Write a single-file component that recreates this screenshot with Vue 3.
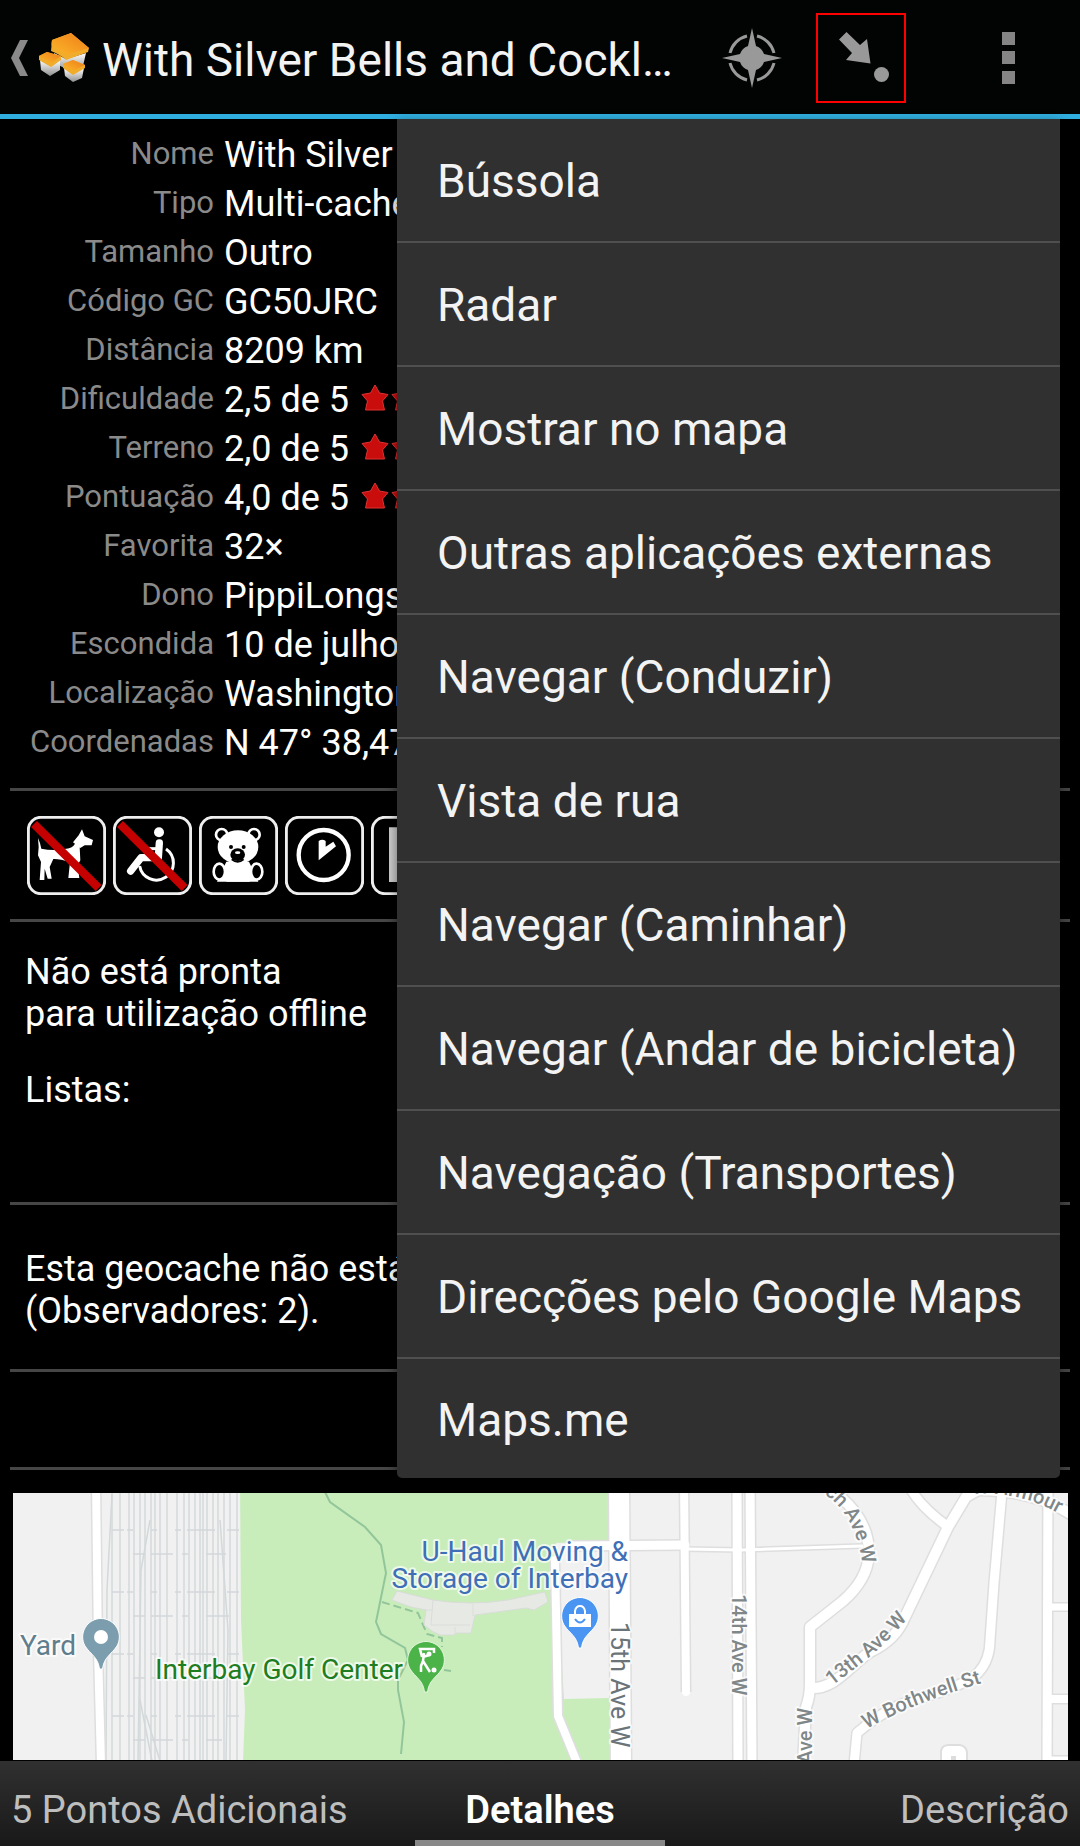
<script setup>
const details = [
  { label: 'Nome', value: 'With Silver Bells and Cockle Shells' },
  { label: 'Tipo', value: 'Multi-cache' },
  { label: 'Tamanho', value: 'Outro' },
  { label: 'Código GC', value: 'GC50JRC' },
  { label: 'Distância', value: '8209 km' },
  { label: 'Dificuldade', value: '2,5 de 5', stars: 3 },
  { label: 'Terreno', value: '2,0 de 5', stars: 2 },
  { label: 'Pontuação', value: '4,0 de 5', stars: 4 },
  { label: 'Favorita', value: '32×' },
  { label: 'Dono', value: 'PippiLongstocking' },
  { label: 'Escondida', value: '10 de julho' },
  { label: 'Localização', value: 'Washington' },
  { label: 'Coordenadas', value: 'N 47° 38,47' },
]

const menu = [
  'Bússola',
  'Radar',
  'Mostrar no mapa',
  'Outras aplicações externas',
  'Navegar (Conduzir)',
  'Vista de rua',
  'Navegar (Caminhar)',
  'Navegar (Andar de bicicleta)',
  'Navegação (Transportes)',
  'Direcções pelo Google Maps',
  'Maps.me',
]

const rails = [112, 120, 129, 134, 140, 145, 151, 155, 160, 167, 177, 184, 189, 195, 200, 203, 207, 213, 218, 224, 230, 237]
const sleepers = [
  { y: 1530, d: 'M112 0h12m3 0h6m18 0h6m18 0h6m6 0h28m12 0h12' },
  { y: 1554, d: 'M133 0h12m6 0h22m9 0h6m18 0h20' },
  { y: 1592, d: 'M112 0h12m3 0h6m18 0h6m18 0h6m6 0h28m12 0h12' },
  { y: 1616, d: 'M133 0h12m6 0h22m9 0h6m18 0h23' },
  { y: 1654, d: 'M112 0h12m3 0h6m18 0h6m18 0h6m6 0h28m12 0h12' },
  { y: 1678, d: 'M133 0h12m6 0h22m9 0h6m18 0h20' },
  { y: 1716, d: 'M112 0h12m3 0h6m18 0h6m18 0h6m6 0h28m12 0h12' },
  { y: 1740, d: 'M133 0h12m6 0h22m9 0h6m18 0h16' },
]

const roads = [
  { d: 'M570 1546 L685 1545', w: 9 },
  { d: 'M685 1549 L740 1550 L862 1546', w: 3 },
  { d: 'M96 1480 L98 1650 L101 1765', w: 8 },
  { d: 'M555 1560 L558 1716 L578 1765', w: 8 },
  { d: 'M684 1480 L686 1692', w: 8 },
  { d: 'M737 1480 L738 1765', w: 9 },
  { d: 'M750 1480 L752 1765', w: 9 },
  { d: 'M826 1486 Q870 1515 869 1555 Q867 1580 843 1601 L810 1627 L810 1683 Q810 1697 806 1707 L803 1765', w: 10 },
  { d: 'M810 1688 C835 1690 850 1665 870 1652 Q896 1640 905 1617 L948 1527 L966 1497 L985 1486', w: 10 },
  { d: 'M908 1484 Q918 1505 947 1526', w: 9 },
  { d: 'M854 1765 L857 1733 Q890 1704 925 1697 Q965 1685 978 1673 Q990 1660 990 1640 L994 1583 L1003 1480', w: 9 },
  { d: 'M975 1490 Q1035 1490 1072 1515', w: 10 },
  { d: 'M1048 1480 L1047 1765', w: 9 },
  { d: 'M1048 1607 H1072', w: 7 },
  { d: 'M1048 1699 H1072', w: 8 },
  { d: 'M1050 1759 H1072', w: 5 },
  { d: 'M619 1480 L621 1770', w: 20 },
]

const pinPath = 'M0 -18.5 A18.5 18.5 0 0 1 16 9 C10 18 3 20 1.500 32 H-1.500 C-3 20 -10 18 -16 9 A18.5 18.5 0 0 1 0 -18.5Z'
</script>

<template>
  <div class="screen">
    <header class="bar">
      <button class="up" type="button" aria-label="Voltar">
        <svg class="chevron" viewBox="0 0 17 36"><path d="M9 0H17L8 18L17 36H9L0 18Z" fill="#8a8a8a" /></svg>
        <svg class="logo" viewBox="36 32 54 54">
          <defs>
            <linearGradient id="lid" x1="0" y1="1" x2="1" y2="0">
              <stop offset="0" stop-color="#fbb829" /><stop offset="1" stop-color="#ef7c1a" />
            </linearGradient>
            <linearGradient id="box" x1="0" y1="0" x2="0" y2="1">
              <stop offset="0" stop-color="#fff" /><stop offset="1" stop-color="#8f8f8f" />
            </linearGradient>
          </defs>
          <path d="M53 54L65 60L85 54L82 67L70 72L57 66Z" fill="url(#box)" />
          <path d="M70 34L51 41L50 52Q60 56 65 61L87 53L88 49Z" fill="#f0ac2a" />
          <path d="M70 34L51 41Q50 46 51 47L65 56L88 49Z" fill="url(#lid)" />
          <path d="M39 61L50 67L59 61V71L49 77L40 71Z" fill="url(#box)" />
          <path d="M46 53L38 57V61L50 68L60 61V57Z" fill="#f0ac2a" />
          <path d="M46 53L38 57L50 64L60 57Z" fill="url(#lid)" />
          <path d="M63 69L72 74L83 69L81 79L72 83L64 77Z" fill="url(#box)" />
          <path d="M72 61L62 65V69L72 76L84 69V66Z" fill="#f0ac2a" />
          <path d="M72 61L62 65L72 72L84 66Z" fill="url(#lid)" />
        </svg>
      </button>
      <h1 class="title">With Silver Bells and Cockle Shells</h1>
      <button class="action" type="button" aria-label="Bússola">
        <svg viewBox="-30 -30 60 60" width="60" height="60">
          <g fill="none" stroke="#999" stroke-width="3">
            <path d="M-22 -5A23 23 0 0 1 -5 -22M5 -22A23 23 0 0 1 22 -5M22 5A23 23 0 0 1 5 22M-5 22A23 23 0 0 1 -22 5" />
          </g>
          <path d="M0 -30L4 -12A13 13 0 0 1 12 -4L30 0L12 4A13 13 0 0 1 4 12L0 30L-4 12A13 13 0 0 1 -12 4L-30 0L-12 -4A13 13 0 0 1 -4 -12Z" fill="#999" />
        </svg>
      </button>
      <button class="action marked" type="button" aria-label="Navegar" aria-expanded="true">
        <svg viewBox="2 2 86 86" width="86" height="86" fill="#999">
          <path d="M30.500 19L23 26.500L36 40L30 47L54.500 50.500L51 26L44 32Z" /><circle cx="65.500" cy="61.500" r="7.500" />
        </svg>
      </button>
      <button class="action more" type="button" aria-label="Mais opções">
        <svg viewBox="0 0 13 52" width="13" height="52" fill="#858585"><path d="M0 0H13V13H0ZM0 19H13V32H0ZM0 39H13V52H0Z" /></svg>
      </button>
    </header>

    <main class="body">
      <dl class="details">
        <div v-for="row in details" :key="row.label" class="row">
          <dt>{{ row.label }}</dt>
          <dd>
            {{ row.value }}
            <span v-if="row.stars" class="stars">
              <svg v-for="n in row.stars" :key="n" viewBox="0 0 28 27">
                <path d="M14 1L18.500 9L27 10.500L21.500 17L23.500 26H4.500L6.500 17L1 10.500L9.500 9Z" fill="#c90d0d" stroke="#d33" stroke-linejoin="round" />
              </svg>
            </span>
          </dd>
        </div>
      </dl>

      <section class="block attributes">
        <svg viewBox="83 107 237 237">
          <rect x="87" y="111" width="229" height="229" rx="38" fill="#000" stroke="#eee" stroke-width="9" />
          <path d="M116 173Q124 190 126 205Q160 212 195 206Q220 204 227 190L241 200L243 240L235 255L240 293H207L212 245Q180 235 162 236L151 260L157 295H145L136 265L135 299H121L125 245L116 225L118 200ZM221 186L238 165L248 147L256 168L281 179L277 195L256 195L243 203Z" fill="#fff" />
          <path d="M104 131L298 323" stroke="#c40000" stroke-width="25" />
        </svg>
        <svg viewBox="341 107 237 237">
          <rect x="345" y="111" width="229" height="229" rx="38" fill="#000" stroke="#eee" stroke-width="9" />
          <circle cx="479" cy="156" r="15" fill="#fff" />
          <path d="M480 188L477 232H425L394 272" fill="none" stroke="#fff" stroke-width="22" stroke-linecap="round" stroke-linejoin="round" />
          <path d="M440 205H478" stroke="#fff" stroke-width="9" />
          <path d="M500 206A51 51 0 1 1 421 257" fill="none" stroke="#fff" stroke-width="9" />
          <path d="M362 131L556 323" stroke="#c40000" stroke-width="25" />
        </svg>
        <svg viewBox="598 107 237 237">
          <rect x="602" y="111" width="229" height="229" rx="38" fill="#000" stroke="#eee" stroke-width="9" />
          <g fill="#000" stroke="#fff" stroke-width="8"><circle cx="666" cy="163" r="17" /><circle cx="763" cy="163" r="17" /></g>
          <ellipse cx="715" cy="200" rx="61" ry="50" fill="#fff" />
          <path d="M680 244H748L776 304H652Z" fill="#fff" />
          <g fill="#000" stroke="#fff" stroke-width="8"><ellipse cx="659" cy="274" rx="17" ry="24" /><ellipse cx="771" cy="274" rx="17" ry="24" /></g>
          <path d="M674 262L680 304H750L757 262Z" fill="#fff" />
          <circle cx="694" cy="200" r="6" /><circle cx="732" cy="200" r="6" />
          <ellipse cx="714" cy="223" rx="22" ry="19" /><ellipse cx="714" cy="217" rx="8" ry="4" fill="#fff" />
          <path d="M696 237Q714 252 732 237" fill="none" stroke="#000" stroke-width="5" />
        </svg>
        <svg viewBox="856 107 237 237">
          <rect x="860" y="111" width="229" height="229" rx="38" fill="#000" stroke="#eee" stroke-width="9" />
          <circle cx="972" cy="224" r="75" fill="none" stroke="#fff" stroke-width="13" />
          <path d="M957 182Q968 174 978 182V199L1001 184L1009 198L957 240Z" fill="#fff" />
        </svg>
        <svg viewBox="1114 107 237 237">
          <rect x="1118" y="111" width="229" height="229" rx="38" fill="#000" stroke="#eee" stroke-width="9" />
          <path d="M1168 141H1296V305H1168Z" fill="#ccc" />
        </svg>
      </section>

      <section class="block offline">
        <p>Não está pronta<br />para utilização offline</p>
        <p>Listas:</p>
      </section>

      <section class="block watch">
        <p>Esta geocache não está na sua lista<br />(Observadores: 2).</p>
      </section>

      <section class="block spacer"></section>

      <section class="block map">
        <svg viewBox="13 1493 1055 267" role="img" aria-label="Mapa">
          <defs>
            <path id="along12" d="M824 1494Q860 1517 864 1580" />
            <path id="along13" d="M832 1686C853 1669 876 1656 908 1618" />
            <path id="bothwell" d="M867 1729Q910 1704 985 1682" />
            <path id="armour" d="M972 1494Q1030 1490 1078 1526" />
          </defs>
          <rect x="13" y="1480" width="1055" height="290" fill="#f1f1f1" />
          <g fill="none" stroke="#d3d8da" stroke-width="1.500">
            <path v-for="x in rails" :key="x" :d="`M${x} 1480V1761`" />
            <path d="M112 1494L107 1590L106 1761M150 1520L141 1570L138 1761M140 1700L152 1761M146 1715L160 1761M220 1520L228 1630L226 1761" />
            <path v-for="s in sleepers" :key="s.y" :d="s.d" :transform="`translate(0 ${s.y})`" />
          </g>
          <path d="M240 1480H609L610 1761H243L245 1710L241 1620Z" fill="#c8edbb" />
          <path d="M556 1543L609 1541V1698L564 1699L561 1650Z" fill="#f1f1f1" />
          <g fill="none" stroke="#92c69a" stroke-width="2">
            <path d="M324 1490L330 1502L365 1527L381 1545L386 1573L376 1622L381 1634L405 1648L408 1660L398 1680V1690L404 1722L401 1754M444 1670L451 1671" />
            <path d="M382 1602L418 1613L427 1634L442 1638V1647" stroke-dasharray="8 4" />
          </g>
          <path d="M397 1591L433 1600Q470 1606 508 1600L545 1592L548 1602L534 1610L526 1608L475 1615L471 1633H456L454 1635H440L432 1631L424 1625L426 1610L411 1607L392 1600Z" fill="#e7eae4" stroke="#d9dcd9" />
          <path d="M433 1600L431 1625M473 1604V1616M424 1610H432M431 1625H470M455 1627V1634" stroke="#d9dcd9" fill="none" />
          <g fill="none" stroke="#dedede" stroke-linejoin="round">
            <path v-for="(r, i) in roads" :key="i" :d="r.d" :stroke-width="r.w + 3" />
            <path d="M941 1765V1751Q942 1745 949 1745H960Q966 1746 967 1752V1765" stroke-width="2" fill="#fff" />
          </g>
          <g fill="none" stroke="#fff" stroke-linejoin="round" stroke-linecap="round">
            <path v-for="(r, i) in roads" :key="i" :d="r.d" :stroke-width="r.w" />
          </g>
          <rect x="951" y="1756" width="5" height="5" fill="#ddd" />

          <g transform="translate(101 1637)"><path :d="pinPath" fill="#7b9dad" stroke="#fff" /><circle r="7" fill="#fff" /></g>
          <g transform="translate(426 1660)">
            <path :d="pinPath" fill="#4cb349" stroke="#e3f6dd" />
            <path d="M8 -7V-11H-6L-4 -3M-2 -7L-3 1M-3 -3L3 -5M-3 1L-5 6V12M-3 1L4 12" fill="none" stroke="#fff" stroke-width="2.500" />
            <circle cx="3" cy="-6" r="2.500" fill="#fff" /><circle cx="8" cy="10" r="2.500" fill="#fff" />
          </g>
          <g transform="translate(580 1616)">
            <path :d="pinPath" fill="#4a95f2" stroke="#fff" />
            <rect x="-11" y="-2" width="22" height="13" fill="#fff" />
            <path d="M-5 -2V-5Q-4 -10 0 -10Q4 -10 5 -5V-2" fill="none" stroke="#fff" stroke-width="2" />
            <path d="M-5 3Q0 10 5 3" fill="none" stroke="#4a95f2" stroke-width="2" />
          </g>

          <g class="place">
            <text x="20" y="1655" fill="#5f7d8c">Yard</text>
            <text x="403" y="1679" fill="#1d7d20" text-anchor="end">Interbay Golf Center</text>
            <text x="628" y="1561" fill="#3f6fb6" text-anchor="end">U-Haul Moving &amp;</text>
            <text x="628" y="1588" fill="#3f6fb6" text-anchor="end">Storage of Interbay</text>
          </g>
          <text class="avenue" transform="translate(611 1622) rotate(90)">15th Ave W</text>
          <g class="street">
            <text transform="translate(732 1594) rotate(90)">14th Ave W</text>
            <text transform="translate(812 1708) rotate(-90)" text-anchor="end">12th Ave W</text>
            <text><textPath href="#along12">ch Ave W</textPath></text>
            <text><textPath href="#along13">13th Ave W</textPath></text>
            <text><textPath href="#bothwell">W Bothwell St</textPath></text>
            <text><textPath href="#armour">W Armour</textPath></text>
          </g>
        </svg>
      </section>

      <ul class="menu" role="menu">
        <li v-for="item in menu" :key="item" role="none">
          <button type="button" role="menuitem">{{ item }}</button>
        </li>
      </ul>
    </main>

    <nav class="tabs">
      <a href="#pontos">5 Pontos Adicionais</a>
      <a href="#detalhes" class="current" aria-current="page">Detalhes</a>
      <a href="#descricao">Descrição</a>
    </nav>
  </div>
</template>

<style>
body {
  margin: 0;
  background: #000;
}
</style>

<style scoped>
.screen {
  display: flex;
  flex-direction: column;
  min-height: 100vh;
  background: #000;
  color: #fff;
  font-family: Roboto, "Liberation Sans", sans-serif;
}
svg {
  display: block;
  flex: none;
}
button {
  margin: 0;
  padding: 0;
  border: 0;
  background: none;
  color: inherit;
  font: inherit;
}
.bar {
  display: flex;
  align-items: center;
  box-sizing: border-box;
  height: 119px;
  padding-top: 2px;
  border-bottom: 5px solid #30aee0;
  background: #020303;
}
.up {
  display: flex;
  align-items: center;
  gap: 9px;
  padding: 0 11px 0 11px;
}
.chevron {
  width: 17px;
  height: 36px;
}
.logo {
  width: 54px;
  height: 54px;
}
.title {
  flex: 1;
  margin: 0;
  padding-top: 4px;
  overflow: hidden;
  color: #f3f3f3;
  font-size: 46px;
  font-weight: 400;
  line-height: 60px;
  text-overflow: ellipsis;
  white-space: nowrap;
}
.action {
  display: flex;
  flex: none;
  align-items: center;
  justify-content: center;
  box-sizing: border-box;
  width: 90px;
  height: 90px;
  margin-left: 19px;
}
.marked {
  border: 2px solid #f00;
}
.more {
  width: 108px;
  margin: 0 18px 0 48px;
}
.body {
  position: relative;
  flex: 1;
}
.details {
  margin: 0;
  padding: 11px 0 21px;
}
.row {
  display: flex;
  align-items: center;
  gap: 10px;
  height: 49px;
}
dt {
  width: 214px;
  color: #8a8a8a;
  font-size: 31px;
  line-height: 36px;
  text-align: right;
  padding-bottom: 2px;
}
dd {
  display: flex;
  align-items: center;
  gap: 12px;
  margin: 0;
  font-size: 36px;
  white-space: nowrap;
}
.stars {
  display: flex;
  gap: 2px;
  padding-bottom: 4px;
}
.stars svg {
  width: 28px;
  height: 27px;
}
.block {
  margin: 0 10px;
  border-top: 3px solid #464646;
}
.block p {
  margin: 0;
  font-size: 36px;
  line-height: 42px;
}
.attributes {
  display: flex;
  gap: 7px;
  padding: 25px 17px 24px;
}
.attributes svg {
  width: 79px;
  height: 79px;
}
.offline {
  padding: 29px 15px 91px;
}
.offline p + p {
  margin-top: 34px;
}
.watch {
  padding: 43px 15px 37px;
}
.spacer {
  height: 95px;
}
.map {
  padding: 23px 2px 0 3px;
}
.map svg {
  width: 100%;
  height: auto;
}
.map text {
  paint-order: stroke;
  stroke: #fff;
  stroke-width: 4px;
  stroke-opacity: 0.7;
  stroke-linejoin: round;
}
.place {
  font-size: 28px;
}
.avenue {
  fill: #6b7479;
  font-size: 25px;
}
.street {
  fill: #808789;
  font-size: 20px;
  font-weight: 500;
}
.menu {
  position: absolute;
  top: 0;
  right: 20px;
  box-sizing: border-box;
  width: 663px;
  margin: 0;
  padding: 0;
  border-radius: 0 0 5px 5px;
  background: #303030;
  box-shadow: 0 4px 12px rgba(0, 0, 0, 0.5);
  list-style: none;
}
.menu li + li {
  border-top: 2px solid #4f4f4f;
}
.menu button {
  display: block;
  width: 100%;
  padding: 35px 40px 33px;
  color: #f3f3f3;
  font-size: 46px;
  line-height: 54px;
  text-align: left;
  white-space: nowrap;
}
.menu li:last-child button {
  padding: 34px 40px 31px;
}
.tabs {
  display: grid;
  grid-template-columns: 1fr 250px 1fr;
  height: 85px;
  background: linear-gradient(#303030, #191919);
  font-size: 38px;
  line-height: 98px;
}
.tabs a {
  padding: 0 11px;
  overflow: hidden;
  color: #bebebe;
  text-decoration: none;
  white-space: nowrap;
}
.tabs a:last-child {
  text-align: right;
}
.tabs .current {
  box-sizing: border-box;
  border-bottom: 6px solid #888;
  color: #fff;
  font-weight: 600;
  text-align: center;
}
</style>
